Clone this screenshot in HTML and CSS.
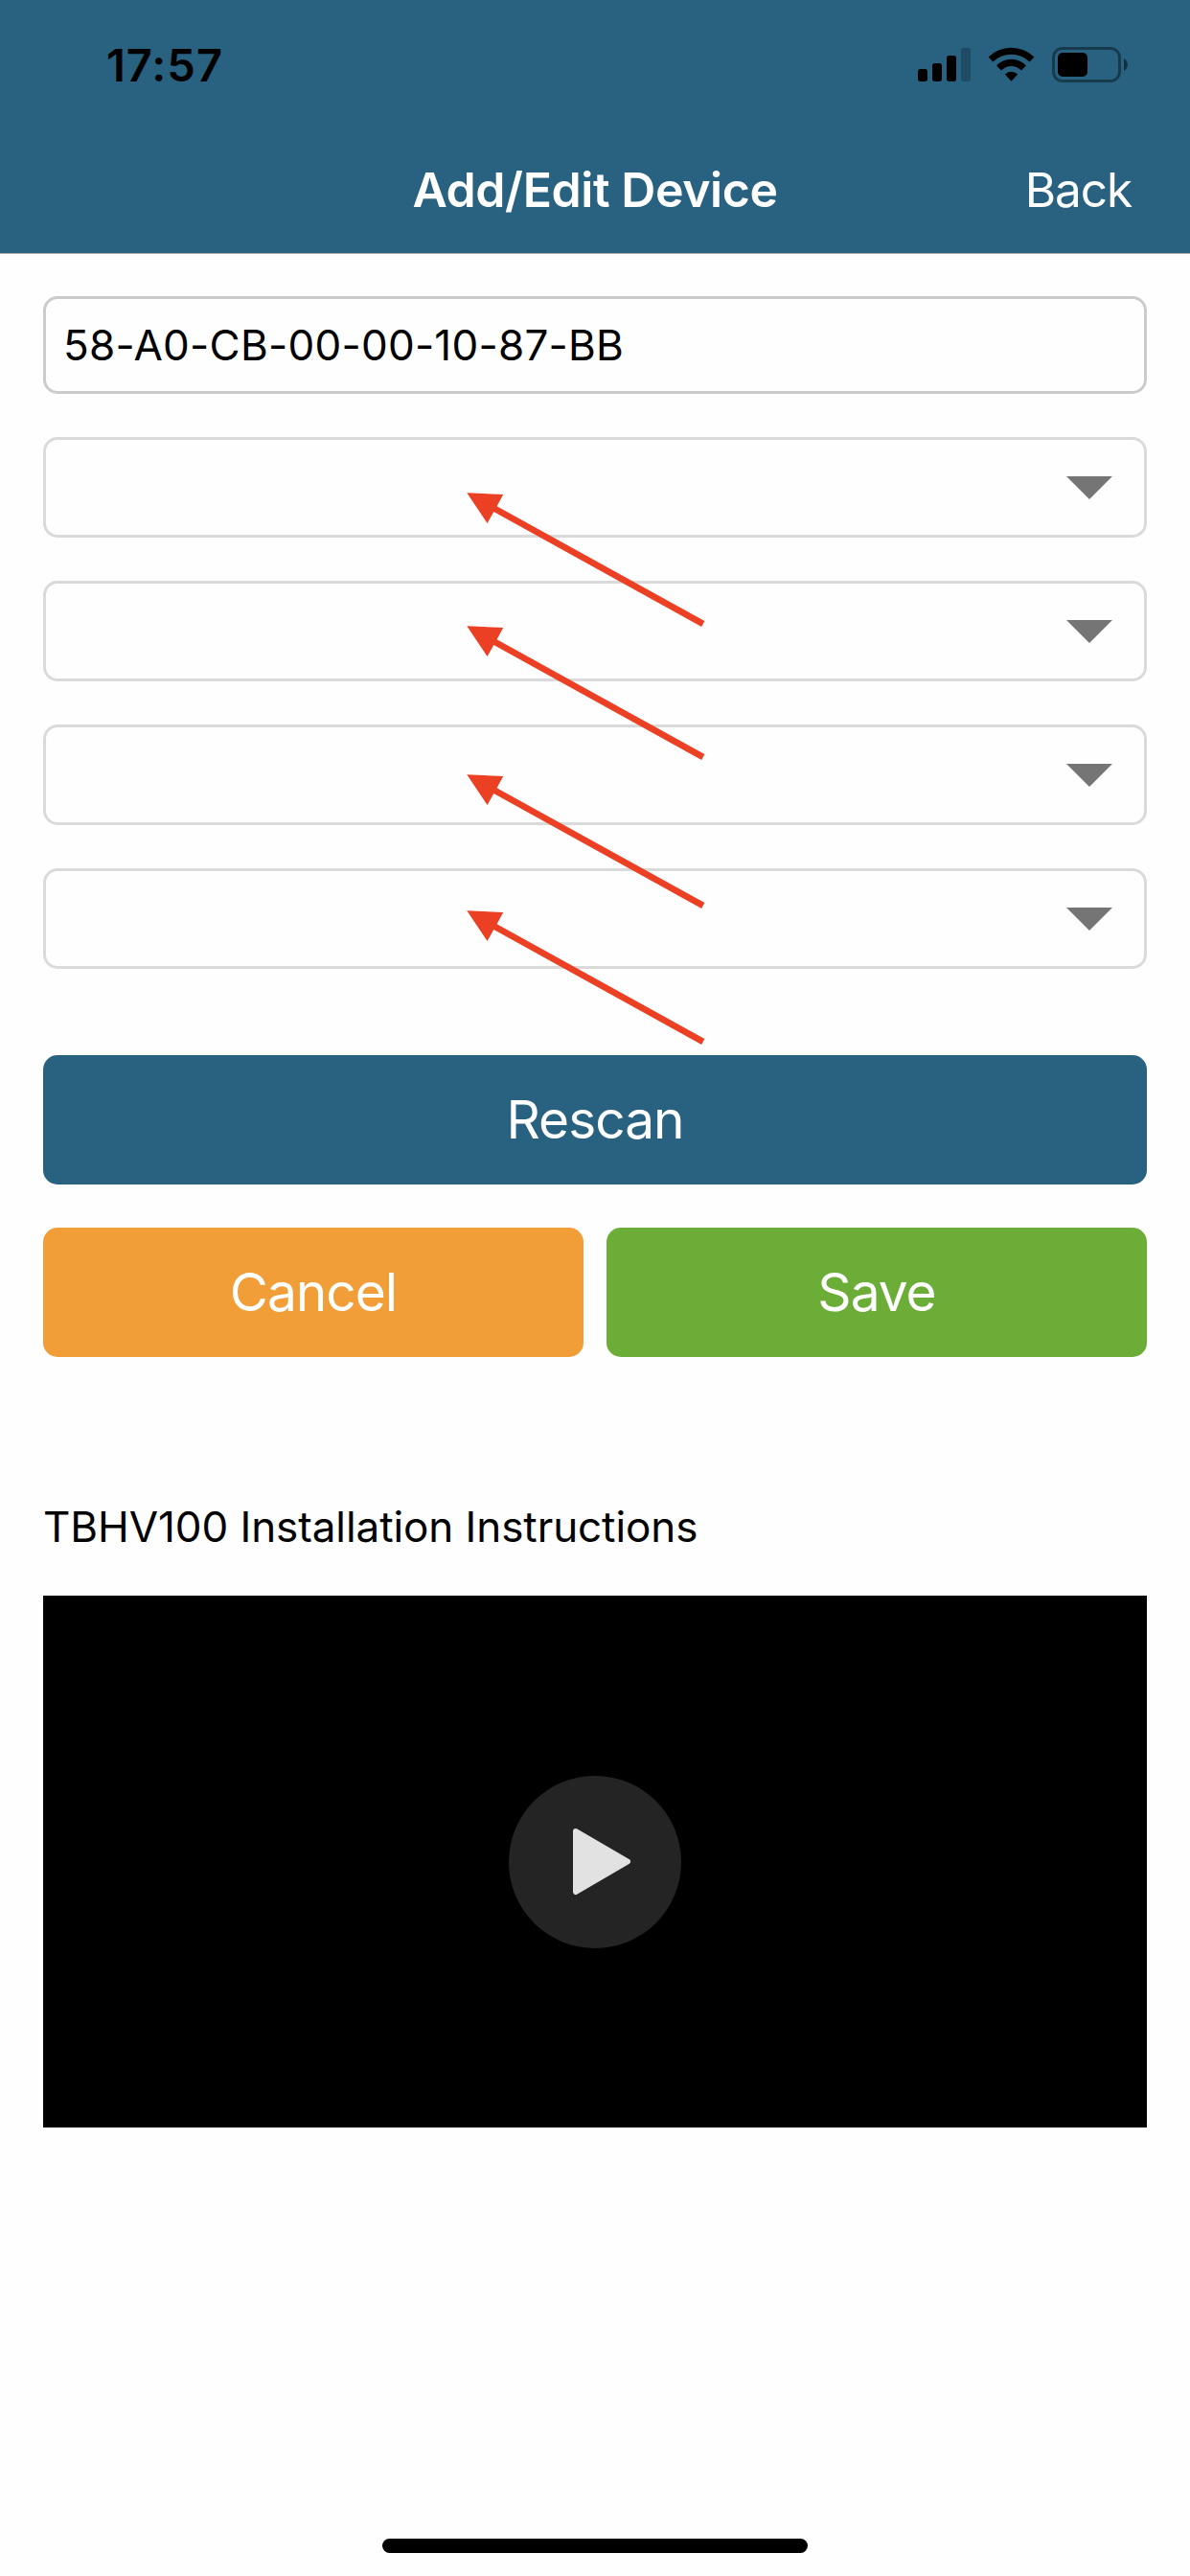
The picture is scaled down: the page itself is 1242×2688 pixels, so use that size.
FILE: index.html
```html
<!DOCTYPE html>
<html lang="en">
<head>
<meta charset="utf-8">
<title>Add/Edit Device</title>
<link rel="stylesheet" href="styles.css">
</head>
<body>
<div class="screen">
  <header class="header">
    <div class="status">
      <span class="clock">17:57</span>
      <svg class="status-icons" width="222" height="40" viewBox="957 47 222 40">
        <rect x="958" y="72" width="10" height="13" rx="2.7"/>
        <rect x="973" y="66" width="10" height="19" rx="2.7"/>
        <rect x="988" y="58" width="10" height="27" rx="2.7"/>
        <rect x="1003" y="50" width="10" height="35" rx="2.7" opacity=".22"/>
        <path d="M1031.6 59.5A34 34 0 0 1 1079.4 59.5L1074.6 64.6A27 27 0 0 0 1036.4 64.6Z"/>
        <path d="M1040.1 68.4A21.3 21.3 0 0 1 1070.9 68.4L1066 73.5A14.4 14.4 0 0 0 1045 73.5Z"/>
        <path d="M1048.8 77.6A9.5 9.5 0 0 1 1062.2 77.6L1055.5 84.8Z"/>
        <rect x="1099.5" y="50.5" width="69" height="34" rx="9.5" fill="none" stroke="#000" stroke-width="3" opacity=".4"/>
        <rect x="1104" y="55" width="31" height="25" rx="5"/>
        <path d="M1173 61A7.4 7.4 0 0 1 1173 74Z" opacity=".5"/>
      </svg>
    </div>
    <nav class="nav">
      <h1 class="nav-title">Add/Edit Device</h1>
      <a class="nav-back">Back</a>
    </nav>
  </header>

  <main class="content">
    <form class="form">
      <div class="field field-text">58-A0-CB-00-00-10-87-BB</div>
      <div class="field select"><svg width="48" height="24" viewBox="0 0 48 24"><path d="M0 0H48L24 24Z"/></svg></div>
      <div class="field select"><svg width="48" height="24" viewBox="0 0 48 24"><path d="M0 0H48L24 24Z"/></svg></div>
      <div class="field select"><svg width="48" height="24" viewBox="0 0 48 24"><path d="M0 0H48L24 24Z"/></svg></div>
      <div class="field select"><svg width="48" height="24" viewBox="0 0 48 24"><path d="M0 0H48L24 24Z"/></svg></div>
    </form>
    <div class="actions">
      <div class="button rescan">Rescan</div>
      <div class="button cancel">Cancel</div>
      <div class="button save">Save</div>
    </div>
    <h2 class="video-title">TBHV100 Installation Instructions</h2>
    <div class="video">
      <div class="play">
        <svg width="180" height="180" viewBox="0 0 180 180"><path d="M70 58L124 89.5L70 121Z"/></svg>
      </div>
    </div>
  </main>
  <footer class="footer"><div class="home-indicator"></div></footer>

  <!-- annotation arrows over the empty dropdowns -->
  <svg class="arrows" width="260" height="590" viewBox="480 505 260 590">
    <defs><path id="arrow" d="M487.3 514.2L525.2 516L518.6 528.2L735.4 648L732.2 654L515.3 534L508.6 546Z"/></defs>
    <use href="#arrow"/>
    <use href="#arrow" y="139"/>
    <use href="#arrow" y="294"/>
    <use href="#arrow" y="436"/>
  </svg>
</div>
</body>
</html>
```
FILE: styles.css
```css
* { box-sizing: border-box; }

body {
  margin: 0;
  background: #fefefe;
  color: #000;
  font-family: Inter, "Liberation Sans", sans-serif;
}

h1, h2 { margin: 0; }
svg { display: block; }

.screen {
  position: relative;
  display: flex;
  flex-direction: column;
  width: 1242px;
  height: 2688px;
}

.header {
  height: 265px;
  background: #296180;
  border-bottom: 1px solid #a5a9ab;
}

.status {
  display: flex;
  justify-content: space-between;
  align-items: center;
  height: 132px;
  padding: 2px 63px 0 111px;
}

.clock {
  font-size: 47px;
  font-weight: 600;
  letter-spacing: 1px;
}

.nav {
  display: grid;
  grid-template-columns: 1fr auto 1fr;
  align-items: center;
  height: 132px;
  padding: 0 61px;
  color: #fff;
}

.nav-title {
  grid-column: 2;
  font-size: 50px;
  font-weight: 600;
  letter-spacing: -0.43px;
}

.nav-back {
  justify-self: end;
  font-size: 49.5px;
  letter-spacing: -1.1px;
}

.content { padding: 44px 45px 0; }

.form {
  display: flex;
  flex-direction: column;
  gap: 45px;
}

.field {
  display: flex;
  align-items: center;
  height: 105px;
  border: 3px solid #dadada;
  border-radius: 15px;
}

.field-text {
  height: 102px;
  padding-left: 18px;
  border-color: #cbcbcb;
  font-size: 44px;
  letter-spacing: 0.24px;
}

.select {
  justify-content: flex-end;
  padding-right: 33px;
  fill: #757575;
}

.actions {
  display: grid;
  grid-template-columns: 1fr 1fr;
  gap: 45px 24px;
  margin-top: 90px;
}

.button {
  display: flex;
  align-items: center;
  justify-content: center;
  height: 135px;
  padding-bottom: 2px;
  border-radius: 15px;
  color: #fff;
  font-size: 55px;
  letter-spacing: -1px;
}

.rescan { grid-column: 1 / -1; background: #296180; }
.cancel { background: #f19e38; }
.save { background: #6bad36; }

.video-title {
  margin-top: 147px;
  font-size: 44px;
  font-weight: 400;
  line-height: 60px;
  letter-spacing: -0.08px;
}

.video {
  display: flex;
  align-items: center;
  justify-content: center;
  height: 555px;
  margin-top: 42px;
  background: #000;
}

.play {
  width: 180px;
  height: 180px;
  border-radius: 50%;
  background: #242424;
}

.play path {
  fill: #e2e2e2;
  stroke: #e2e2e2;
  stroke-width: 6px;
  stroke-linejoin: round;
}

.footer {
  display: flex;
  justify-content: center;
  margin-top: auto;
  padding-bottom: 24px;
}

.home-indicator {
  width: 444px;
  height: 15px;
  border-radius: 8px;
  background: #000;
}

.arrows {
  position: absolute;
  top: 505px;
  left: 480px;
  fill: #ec4025;
}
```
